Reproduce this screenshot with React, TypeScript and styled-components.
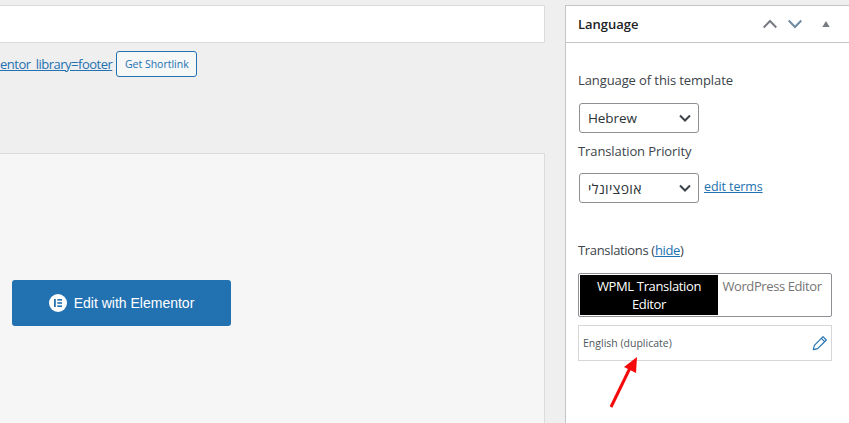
import React from "react";
import styled, { createGlobalStyle } from "styled-components";

const Global = createGlobalStyle`
  html, body { margin: 0; padding: 0; background: #efefef; height: 100%; overflow: hidden; }
  body { font-family: "Open Sans", "Liberation Sans", sans-serif; font-size: 13px; color: #3c434a; letter-spacing: -0.1px; }
`;

const Page = styled.div`
  display: flex;
  align-items: flex-start;
  width: 849px;
  height: 423px;
  overflow: hidden;
  padding-top: 5px;
  box-sizing: border-box;
`;

const Main = styled.div`
  width: 545px;
  flex: none;
  display: flex;
  flex-direction: column;
`;

const TitleBar = styled.div`
  height: 36px;
  background: #fff;
  border: 1px solid #dcdcde;
  border-left: none;
`;

const LinkRow = styled.div`
  display: flex;
  align-items: center;
  gap: 4px;
  height: 26px;
  margin-top: 8px;
  overflow: hidden;
`;

const PermaLink = styled.a`
  color: #2271b1;
  text-decoration: underline;
  font-size: 13px;
  letter-spacing: -0.5px;
  margin: 0 0 1px 0;
  white-space: nowrap;
`;

const SmallButton = styled.button`
  width: 81px;
  height: 26px;
  padding: 0;
  border: 1px solid #2271b1;
  border-radius: 3px;
  background: #f6f7f7;
  color: #2271b1;
  font: 10.5px "Open Sans", sans-serif;
`;

const Editor = styled.div`
  height: 300px;
  margin-top: 76px;
  background: #f6f6f6;
  border: 1px solid #dcdcde;
  border-left: none;
  border-bottom: none;
  display: flex;
  padding: 126px 0 0 12px;
  box-sizing: border-box;
  align-items: flex-start;
`;

const ElementorButton = styled.button`
  width: 219px;
  height: 46px;
  display: flex;
  align-items: center;
  justify-content: center;
  gap: 7px;
  background: #2271b1;
  border: none;
  border-radius: 3px;
  color: #fff;
  font: 14px "Liberation Sans", Arial, sans-serif;
  padding: 0;
`;

const Side = styled.aside`
  position: relative;
  margin-left: 20px;
  width: 300px;
  height: 430px;
  flex: none;
  box-sizing: border-box;
  background: #fff;
  border: 1px solid #c3c4c7;
`;

const Head = styled.header`
  display: flex;
  align-items: center;
  height: 36px;
  padding: 0 32px 0 12px;
  border-bottom: 1px solid #c3c4c7;
`;

const HeadTitle = styled.h2`
  margin: 0;
  flex: 1;
  font-size: 13px;
  font-weight: 600;
  letter-spacing: 0;
  color: #1d2327;
`;

const HeadIcons = styled.div`
  display: flex;
  align-items: center;
  gap: 11px;
  svg { display: block; }
`;

const CollapseIcon = styled.svg`
  margin-left: 7px;
`;

const Body = styled.div`
  display: flex;
  flex-direction: column;
  align-items: flex-start;
  padding: 28px 0 0 12px;
`;

const Label = styled.div<{ $top?: number; $track?: number }>`
  font-size: 13px;
  line-height: 18px;
  margin-top: ${(p) => p.$top ?? 0}px;
  letter-spacing: ${(p) => p.$track ?? -0.1}px;
  color: #3c434a;
  a { color: #2271b1; }
`;

const PriorityRow = styled.div`
  display: flex;
  align-items: flex-start;
  gap: 5px;
  margin-top: 13px;
`;

const Select = styled.div<{ $top?: number }>`
  width: 120px;
  height: 30px;
  margin: ${(p) => p.$top ?? 0}px 0 0 1px;
  box-sizing: border-box;
  display: flex;
  align-items: center;
  justify-content: space-between;
  padding: 0 7px 0 8px;
  border: 1px solid #8c8f94;
  border-radius: 3px;
  background: #fff;
  font-size: 13.5px;
  color: #2c3338;
`;

const HebrewValue = styled.span`
  font-size: 14px;
  letter-spacing: 0.3px;
`;

const EditTerms = styled.a`
  color: #2271b1;
  text-decoration: underline;
  font-size: 12.5px;
  line-height: 18px;
  margin-top: 5px;
`;

const Tabs = styled.div`
  display: flex;
  width: 254px;
  height: 44px;
  margin-top: 14px;
  box-sizing: border-box;
  border: 1px solid #8c8f94;
  border-radius: 2px;
  padding: 1px;
`;

const TabOn = styled.div`
  width: 138px;
  flex: none;
  background: #000;
  color: #fff;
  text-align: center;
  font-size: 13px;
  letter-spacing: -0.35px;
  line-height: 18px;
  padding-top: 2px;
`;

const TabOff = styled.div`
  flex: 1;
  text-align: center;
  color: #757575;
  font-size: 13px;
  letter-spacing: -0.4px;
  line-height: 18px;
  padding: 2px 4px 0 0;
`;

const TranslationRow = styled.div`
  display: flex;
  align-items: center;
  justify-content: space-between;
  box-sizing: border-box;
  width: 254px;
  height: 36px;
  margin-top: 8px;
  padding: 0 3px 0 4px;
  border: 1px solid #d5d5da;
  font-size: 10.5px;
  letter-spacing: 0;
  color: #50575e;
`;

const ArrowOverlay = styled.svg`
  position: absolute;
  left: 40px;
  top: 345px;
`;

const Chevron = () => (
  <svg width="12" height="12" viewBox="0 0 12 12" fill="none" stroke="#3c434a" strokeWidth="2">
    <path d="M1 3.5 L6 8.5 L11 3.5" />
  </svg>
);

export default function App() {
  return (
    <>
      <Global />
      <Page>
        <Main>
          <TitleBar />
          <LinkRow>
            <PermaLink href="#">entor_library=footer</PermaLink>
            <SmallButton>Get Shortlink</SmallButton>
          </LinkRow>
          <Editor>
            <ElementorButton>
              <svg width="18" height="18" viewBox="0 0 18 18">
                <circle cx="9" cy="9" r="9" fill="#fff" />
                <rect x="5" y="5" width="1.8" height="8" fill="#2271b1" />
                <rect x="8.3" y="5" width="4.7" height="1.6" fill="#2271b1" />
                <rect x="8.3" y="8.2" width="4.7" height="1.6" fill="#2271b1" />
                <rect x="8.3" y="11.4" width="4.7" height="1.6" fill="#2271b1" />
              </svg>
              Edit with Elementor
            </ElementorButton>
          </Editor>
        </Main>
        <Side>
          <Head>
            <HeadTitle>Language</HeadTitle>
            <HeadIcons>
              <svg width="14" height="10" viewBox="0 0 14 10" fill="none" stroke="#787c82" strokeWidth="2">
                <path d="M0.7 8.5 L7 2 L13.3 8.5" />
              </svg>
              <svg width="14" height="10" viewBox="0 0 14 10" fill="none" stroke="#6f8ba3" strokeWidth="2">
                <path d="M0.7 1.5 L7 8 L13.3 1.5" />
              </svg>
              <CollapseIcon width="12" height="10" viewBox="0 0 12 10" fill="#787c82">
                <path d="M2.3 8 L6 2 L9.7 8 Z" />
              </CollapseIcon>
            </HeadIcons>
          </Head>
          <Body>
            <Label>Language of this template</Label>
            <Select $top={14}>
              <span>Hebrew</span>
              <Chevron />
            </Select>
            <Label $top={9}>Translation Priority</Label>
            <PriorityRow>
              <Select>
                <HebrewValue dir="rtl">אופציונלי</HebrewValue>
                <Chevron />
              </Select>
              <EditTerms href="#">edit terms</EditTerms>
            </PriorityRow>
            <Label $top={38} $track={-0.33}>
              Translations (<a href="#">hide</a>)
            </Label>
            <Tabs>
              <TabOn>WPML Translation Editor</TabOn>
              <TabOff>WordPress Editor</TabOff>
            </Tabs>
            <TranslationRow>
              <span>English (duplicate)</span>
              <svg width="16" height="16" viewBox="0 0 24 24" fill="none" stroke="#2271b1" strokeWidth="1.7" strokeLinejoin="round">
                <path d="M2 22 L3.5 15.5 L16.5 2.5 L21.5 7.5 L8.5 20.5 Z" />
                <path d="M14 5 L19 10" />
              </svg>
            </TranslationRow>
          </Body>
          <ArrowOverlay width="34" height="60" viewBox="0 0 34 60">
            <path d="M5 56 L24 17" stroke="#f40a0a" strokeWidth="3" />
            <path d="M31 6 L30 22 L18 16 Z" fill="#f40a0a" />
          </ArrowOverlay>
        </Side>
      </Page>
    </>
  );
}
